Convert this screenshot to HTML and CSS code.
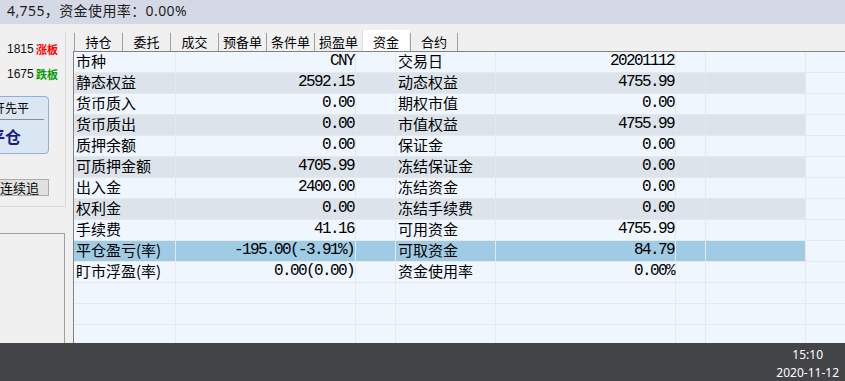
FILE: index.html
```html
<!DOCTYPE html>
<html lang="zh-CN">
<head>
  <meta charset="UTF-8">
  <title>资金</title>
  <link rel="stylesheet" href="styles.css">
</head>
<body>
  <div class="topbar">4,755，资金使用率：0.00%</div>

  <div class="main">
    <div class="side">
      <div class="side-top">
        <div class="quote"><span class="price">1815</span><span class="limit up">涨板</span></div>
        <div class="quote"><span class="price">1675</span><span class="limit down">跌板</span></div>
        <div class="order-box">
          <div class="order-mode">先开先平</div>
          <div class="order-act">平仓</div>
        </div>
        <div class="chase">连续追</div>
      </div>
      <div class="side-bottom"></div>
    </div>

    <div class="pane">
      <div class="tabs">
        <div class="tab">持仓</div>
        <div class="tab">委托</div>
        <div class="tab">成交</div>
        <div class="tab">预备单</div>
        <div class="tab">条件单</div>
        <div class="tab">损盈单</div>
        <div class="tab active">资金</div>
        <div class="tab last">合约</div>
      </div>

      <div class="grid">
        <div class="row">
          <div class="cell label">市种</div><div class="cell val">CNY</div><div class="cell"></div>
          <div class="cell label">交易日</div><div class="cell val">20201112</div><div class="cell"></div><div class="cell"></div><div class="cell tail"></div>
        </div>
        <div class="row alt">
          <div class="cell label">静态权益</div><div class="cell val">2592.15</div><div class="cell"></div>
          <div class="cell label">动态权益</div><div class="cell val">4755.99</div><div class="cell"></div><div class="cell"></div><div class="cell tail"></div>
        </div>
        <div class="row">
          <div class="cell label">货币质入</div><div class="cell val">0.00</div><div class="cell"></div>
          <div class="cell label">期权市值</div><div class="cell val">0.00</div><div class="cell"></div><div class="cell"></div><div class="cell tail"></div>
        </div>
        <div class="row alt">
          <div class="cell label">货币质出</div><div class="cell val">0.00</div><div class="cell"></div>
          <div class="cell label">市值权益</div><div class="cell val">4755.99</div><div class="cell"></div><div class="cell"></div><div class="cell tail"></div>
        </div>
        <div class="row">
          <div class="cell label">质押余额</div><div class="cell val">0.00</div><div class="cell"></div>
          <div class="cell label">保证金</div><div class="cell val">0.00</div><div class="cell"></div><div class="cell"></div><div class="cell tail"></div>
        </div>
        <div class="row alt">
          <div class="cell label">可质押金额</div><div class="cell val">4705.99</div><div class="cell"></div>
          <div class="cell label">冻结保证金</div><div class="cell val">0.00</div><div class="cell"></div><div class="cell"></div><div class="cell tail"></div>
        </div>
        <div class="row">
          <div class="cell label">出入金</div><div class="cell val">2400.00</div><div class="cell"></div>
          <div class="cell label">冻结资金</div><div class="cell val">0.00</div><div class="cell"></div><div class="cell"></div><div class="cell tail"></div>
        </div>
        <div class="row alt">
          <div class="cell label">权利金</div><div class="cell val">0.00</div><div class="cell"></div>
          <div class="cell label">冻结手续费</div><div class="cell val">0.00</div><div class="cell"></div><div class="cell"></div><div class="cell tail"></div>
        </div>
        <div class="row">
          <div class="cell label">手续费</div><div class="cell val">41.16</div><div class="cell"></div>
          <div class="cell label">可用资金</div><div class="cell val">4755.99</div><div class="cell"></div><div class="cell"></div><div class="cell tail"></div>
        </div>
        <div class="row selected">
          <div class="cell label">平仓盈亏(率)</div><div class="cell val">-195.00(-3.91%)</div><div class="cell"></div>
          <div class="cell label">可取资金</div><div class="cell val">84.79</div><div class="cell"></div><div class="cell"></div><div class="cell tail"></div>
        </div>
        <div class="row">
          <div class="cell label">盯市浮盈(率)</div><div class="cell val">0.00(0.00)</div><div class="cell"></div>
          <div class="cell label">资金使用率</div><div class="cell val">0.00%</div><div class="cell"></div><div class="cell"></div><div class="cell tail"></div>
        </div>
        <div class="row">
          <div class="cell"></div><div class="cell"></div><div class="cell"></div><div class="cell"></div><div class="cell"></div><div class="cell"></div><div class="cell"></div><div class="cell tail"></div>
        </div>
        <div class="row">
          <div class="cell"></div><div class="cell"></div><div class="cell"></div><div class="cell"></div><div class="cell"></div><div class="cell"></div><div class="cell"></div><div class="cell tail"></div>
        </div>
        <div class="row">
          <div class="cell"></div><div class="cell"></div><div class="cell"></div><div class="cell"></div><div class="cell"></div><div class="cell"></div><div class="cell"></div><div class="cell tail"></div>
        </div>
      </div>
    </div>
  </div>

  <div class="taskbar">
    <div class="clock">
      <div>15:10</div>
      <div>2020-11-12</div>
    </div>
  </div>
</body>
</html>
```

FILE: styles.css
```css
body {
  margin: 0;
  width: 845px;
  height: 381px;
  overflow: hidden;
  background: #f0f0f0;
  font-family: 'Noto Sans', 'Noto Sans CJK SC', sans-serif;
  color: #000;
}

.topbar {
  height: 24px;
  line-height: 22px;
  padding-left: 7px;
  background: #d5d9e6;
  color: #1e1e1e;
  font-size: 14px;
  letter-spacing: 0.4px;
}

.main {
  display: flex;
  height: 319px;
  overflow: hidden;
}

/* left order panel */
.side {
  width: 66px;
  flex: none;
  display: flex;
  flex-direction: column;
}
.side-top {
  box-sizing: border-box;
  height: 175px;
  margin-top: 8px;
  padding-top: 8px;
  border-right: 1px solid #d9d9d9;
  border-bottom: 1px solid #d9d9d9;
  overflow: hidden;
}
.quote {
  display: flex;
  height: 18px;
  line-height: 18px;
  margin-bottom: 7px;
  padding-left: 7px;
  font-size: 11px;
}
.price {
  width: 29px;
  flex: none;
  color: #111;
  font-family: 'Liberation Sans', Arial, sans-serif;
  font-size: 12px;
}
.limit { font-weight: bold; font-family: 'Noto Sans CJK SC', sans-serif; }
.limit.up { color: #ff0000; }
.limit.down { color: #0a9a0a; }

.order-box {
  box-sizing: border-box;
  width: 73px;
  height: 58px;
  margin: 13px 0 0 -24px;
  border: 1px solid #8fb0d6;
  border-radius: 4px;
  background: #dbe6f3;
  font-family: 'Noto Sans CJK SC', sans-serif;
}
.order-mode {
  height: 22px;
  line-height: 22px;
  margin-right: 4px;
  padding-left: 4px;
  border-bottom: 1px solid #8c8c8c;
  font-size: 12px;
  white-space: nowrap;
}
.order-act {
  line-height: 32px;
  padding-left: 12px;
  font-size: 16px;
  font-weight: bold;
  color: #1a1a8c;
  white-space: nowrap;
}
.chase {
  box-sizing: border-box;
  width: 51px;
  height: 17px;
  margin: 25px 0 0 -2px;
  border: 1px solid #adadad;
  background: #e1e1e1;
  font-family: 'Noto Sans CJK SC', sans-serif;
  font-size: 13px;
  line-height: 15px;
  padding-left: 1px;
  white-space: nowrap;
}
.side-bottom {
  width: 65px;
  box-sizing: border-box;
  flex: 1;
  margin-top: 26px;
  border-top: 1px solid #a0a0a0;
  border-right: 1px solid #a0a0a0;
}

/* tabs + fund table */
.pane {
  flex: 1;
  margin-left: 7px;
  overflow: hidden;
}
.tabs {
  display: flex;
  align-items: flex-end;
  height: 27px;
  padding-left: 1px;
}
.tab {
  box-sizing: border-box;
  width: 48px;
  height: 18px;
  line-height: 17px;
  text-align: center;
  border-left: 1px solid #a0a0a0;
  font-family: 'Noto Sans CJK SC', sans-serif;
  font-size: 13px;
  color: #000;
}
.tab.active {
  width: 47px;
  height: 21px;
  line-height: 23px;
  background: #fff;
  border-left: 1px solid #e3e3e3;
}
.tab.last { border-right: 1px solid #a0a0a0; margin-left: 1px; }

.grid {
  border-top: 1px solid #828282;
  border-left: 1px solid #828282;
  background: #eff6fd;
}
.row {
  display: grid;
  grid-template-columns: 102px 180px 40px 100px 180px 30px 100px 1fr;
  height: 21px;
}
.cell {
  box-sizing: border-box;
  height: 21px;
  border-right: 1px solid #e5e9ee;
  border-bottom: 1px solid #e5e9ee;
  white-space: nowrap;
}
.row.alt .cell { background: #dce3ea; }
.row.selected .cell { background: #9fcbe5; }
.row .cell.tail { background: #eff6fd; border-right: none; }

.label {
  padding-left: 2px;
  font-family: 'Noto Sans CJK SC', sans-serif;
  font-size: 15px;
  line-height: 18px;
}
.val {
  padding-right: 1px;
  text-align: right;
  font-family: 'Liberation Mono', monospace;
  font-size: 16px;
  letter-spacing: -1.6px;
  line-height: 19px;
}

.taskbar {
  height: 38px;
  background: #434447;
  display: flex;
  justify-content: flex-end;
}
.clock {
  padding: 3px 6px 0 0;
  text-align: center;
  color: #fff;
  font-size: 12px;
  line-height: 18px;
}
```
